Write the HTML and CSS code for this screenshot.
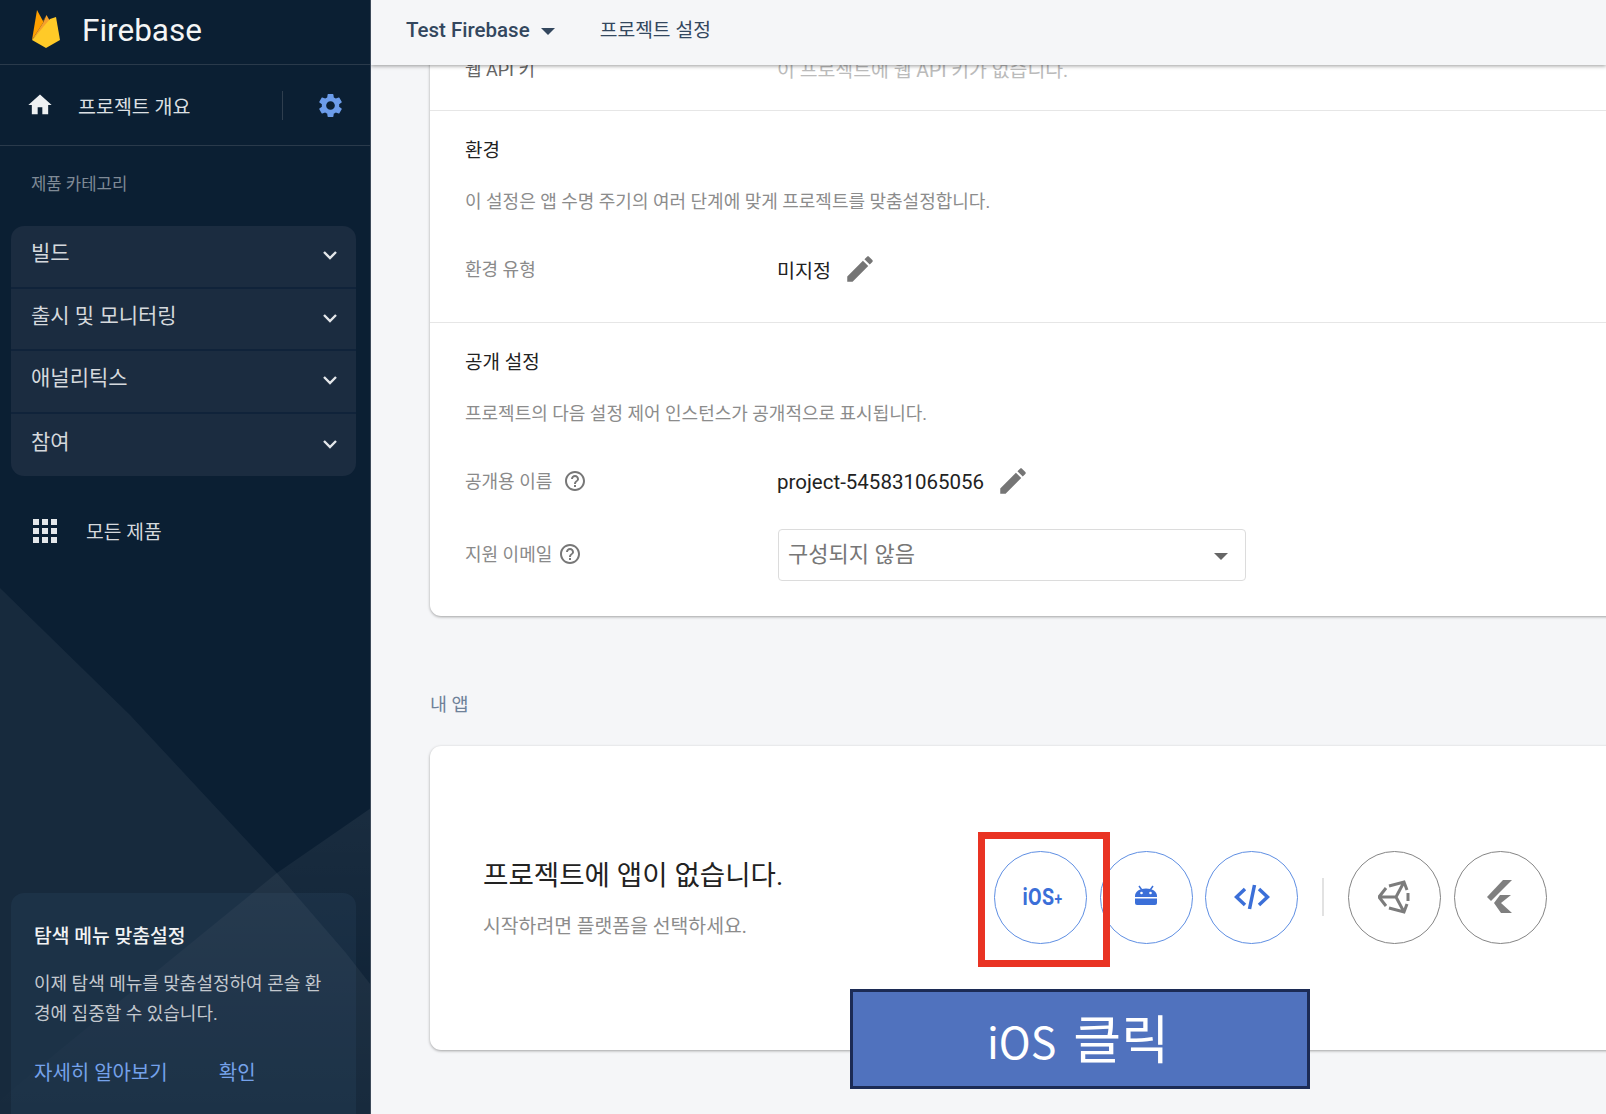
FILE: index.html
```html
<!doctype html>
<html lang="ko">

<head>
	<meta charset="utf-8">
	<title>프로젝트 설정 - Firebase</title>
	<meta name="viewport" content="width=device-width, initial-scale=1">
	<link rel="stylesheet" href="styles.css">
</head>

<body>
	<aside class="sidebar">
		<svg class="sidebar-bg" viewBox="0 0 371 1114">
			<defs>
				<linearGradient id="bg-fade" x1="0" y1="0" x2="0" y2="1">
					<stop offset="0" stop-color="#fff" stop-opacity="0.06"></stop>
					<stop offset="1" stop-color="#fff" stop-opacity="0"></stop>
				</linearGradient>
			</defs>
			<polygon class="bg-left" points="0,588 130,715 277,873 346,953 371,985 371,1114 0,1114"></polygon>
			<polygon class="bg-right" points="371,808 277,873 60,1050 0,1100 0,1114 371,1114"></polygon>
		</svg>

		<div class="brand">
			<svg class="brand-logo" viewBox="0 0 28 38">
				<path d="M0 30 5 0l6.500 12z" fill="#ffa000"></path>
				<path d="M0 30 14.500 5 11 12z" fill="#ffa000"></path>
				<path d="M0 30 11.500 12l3-7 3.500 6z" fill="#f5a02c"></path>
				<path d="M0 30 18 9l6-2 4 23-14 8z" fill="#ffca28"></path>
			</svg>
			<span class="brand-name">Firebase</span>
		</div>

		<div class="overview">
			<svg class="overview-home" viewBox="0 0 24 24"><path d="M10 20v-6h4v6h5v-8h3L12 3 2 12h3v8z"></path></svg>
			<span class="overview-label">프로젝트 개요</span>
			<span class="overview-sep"></span>
			<svg class="overview-gear" viewBox="0 0 24 24"><path d="M19.140 12.940c.04-.3.06-.61.06-.94 0-.32-.02-.64-.07-.94l2.030-1.580a.49.49 0 0 0 .12-.61l-1.920-3.320a.488.488 0 0 0-.59-.22l-2.390.96c-.5-.38-1.030-.7-1.620-.94l-.36-2.540a.484.484 0 0 0-.48-.41h-3.840c-.24 0-.43.17-.47.41l-.36 2.540c-.59.24-1.130.57-1.620.94l-2.390-.96c-.22-.08-.47 0-.59.22L2.740 8.870c-.12.21-.08.47.12.61l2.030 1.580c-.05.3-.09.63-.09.94s.02.64.07.94l-2.030 1.580a.49.49 0 0 0-.12.61l1.920 3.320c.12.22.37.29.59.22l2.390-.96c.5.38 1.030.7 1.620.94l.36 2.540c.05.24.24.41.48.41h3.840c.24 0 .44-.17.47-.41l.36-2.540c.59-.24 1.130-.56 1.620-.94l2.390.96c.22.08.47 0 .59-.22l1.920-3.320c.12-.22.07-.47-.12-.61l-2.010-1.580zM12 15.600A3.610 3.610 0 0 1 8.400 12c0-1.980 1.620-3.600 3.600-3.600s3.600 1.620 3.600 3.600-1.620 3.600-3.600 3.600z"></path></svg>
		</div>

		<div class="category-title">제품 카테고리</div>

		<ul class="category-panel">
			<li class="category-row">빌드<svg class="chevron" viewBox="0 0 16 10"><path d="M2 2l6 6 6-6"></path></svg></li>
			<li class="category-row">출시 및 모니터링<svg class="chevron" viewBox="0 0 16 10"><path d="M2 2l6 6 6-6"></path></svg></li>
			<li class="category-row">애널리틱스<svg class="chevron" viewBox="0 0 16 10"><path d="M2 2l6 6 6-6"></path></svg></li>
			<li class="category-row">참여<svg class="chevron" viewBox="0 0 16 10"><path d="M2 2l6 6 6-6"></path></svg></li>
		</ul>

		<div class="all-products">
			<svg class="all-products-icon" viewBox="0 0 24 24">
				<rect width="6" height="6"></rect><rect x="9" width="6" height="6"></rect><rect x="18" width="6" height="6"></rect>
				<rect y="9" width="6" height="6"></rect><rect x="9" y="9" width="6" height="6"></rect><rect x="18" y="9" width="6" height="6"></rect>
				<rect y="18" width="6" height="6"></rect><rect x="9" y="18" width="6" height="6"></rect><rect x="18" y="18" width="6" height="6"></rect>
			</svg>
			<span>모든 제품</span>
		</div>

		<div class="tip">
			<h3 class="tip-title">탐색 메뉴 맞춤설정</h3>
			<p class="tip-body">이제 탐색 메뉴를 맞춤설정하여 콘솔 환경에 집중할 수 있습니다.</p>
			<div class="tip-links"><a>자세히 알아보기</a><a>확인</a></div>
		</div>
	</aside>

	<main class="main">
		<header class="topbar">
			<span class="topbar-project">Test Firebase</span>
			<span class="topbar-caret"></span>
			<span class="topbar-page">프로젝트 설정</span>
		</header>

		<div class="content">
			<section class="card">
				<div class="card-section first">
					<div class="field faded">
						<span class="field-label">웹 API 키</span>
						<span class="field-value">이 프로젝트에 웹 API 키가 없습니다.</span>
					</div>
				</div>

				<div class="card-section">
					<h2 class="section-title">환경</h2>
					<p class="section-desc">이 설정은 앱 수명 주기의 여러 단계에 맞게 프로젝트를 맞춤설정합니다.</p>
					<div class="field">
						<span class="field-label">환경 유형</span>
						<span class="field-value">미지정</span>
						<svg class="pencil" viewBox="0 0 24 24"><path d="M3 17.250V21h3.750L17.810 9.940l-3.750-3.750L3 17.250zM20.710 7.040c.39-.39.39-1.020 0-1.410l-2.340-2.340c-.39-.39-1.020-.39-1.410 0l-1.830 1.830 3.750 3.750 1.830-1.830z"></path></svg>
					</div>
				</div>

				<div class="card-section last">
					<h2 class="section-title">공개 설정</h2>
					<p class="section-desc">프로젝트의 다음 설정 제어 인스턴스가 공개적으로 표시됩니다.</p>
					<div class="field">
						<span class="field-label">공개용 이름
							<svg class="help" viewBox="0 0 24 24"><path d="M11 18h2v-2h-2v2zm1-16C6.480 2 2 6.480 2 12s4.480 10 10 10 10-4.480 10-10S17.520 2 12 2zm0 18c-4.410 0-8-3.590-8-8s3.590-8 8-8 8 3.590 8 8-3.590 8-8 8zm0-14c-2.210 0-4 1.790-4 4h2c0-1.100.9-2 2-2s2 .9 2 2c0 2-3 1.750-3 5h2c0-2.250 3-2.500 3-5 0-2.210-1.790-4-4-4z"></path></svg>
						</span>
						<span class="field-value project-id">project-545831065056</span>
						<svg class="pencil" viewBox="0 0 24 24"><path d="M3 17.250V21h3.750L17.810 9.940l-3.750-3.750L3 17.250zM20.710 7.040c.39-.39.39-1.020 0-1.410l-2.340-2.340c-.39-.39-1.020-.39-1.410 0l-1.830 1.830 3.750 3.750 1.830-1.830z"></path></svg>
					</div>
					<div class="field field-select">
						<span class="field-label">지원 이메일
							<svg class="help" viewBox="0 0 24 24"><path d="M11 18h2v-2h-2v2zm1-16C6.480 2 2 6.480 2 12s4.480 10 10 10 10-4.480 10-10S17.520 2 12 2zm0 18c-4.410 0-8-3.590-8-8s3.590-8 8-8 8 3.590 8 8-3.590 8-8 8zm0-14c-2.210 0-4 1.790-4 4h2c0-1.100.9-2 2-2s2 .9 2 2c0 2-3 1.750-3 5h2c0-2.250 3-2.500 3-5 0-2.210-1.790-4-4-4z"></path></svg>
						</span>
						<div class="select"><span class="select-text">구성되지 않음</span><span class="select-caret"></span></div>
					</div>
				</div>
			</section>

			<h2 class="apps-title">내 앱</h2>

			<section class="card apps-card">
				<div class="apps-text">
					<h3 class="apps-heading">프로젝트에 앱이 없습니다.</h3>
					<p class="apps-sub">시작하려면 플랫폼을 선택하세요.</p>
				</div>
				<div class="platforms">
					<div class="platform blue"><span class="ios-mark">iOS<small>+</small></span></div>
					<div class="platform blue">
						<svg class="platform-icon" viewBox="0 0 24 24">
							<path class="fill" d="M1 11C1 6.500 5.500 3.500 12 3.500s11 3 11 7.500v1H1z"></path>
							<path class="line" d="M5 1l2.500 3.500M19 1l-2.500 3.500"></path>
							<circle cx="7.500" cy="8" r="1.300" fill="#fff"></circle>
							<circle cx="16.500" cy="8" r="1.300" fill="#fff"></circle>
							<path class="fill" d="M1 13.500h22V18a2 2 0 0 1-2 2H3a2 2 0 0 1-2-2z"></path>
						</svg>
					</div>
					<div class="platform blue">
						<svg class="platform-icon wide" viewBox="0 0 36 26">
							<path class="line thick" d="M11 5 2.500 13l8.500 8M25 5l8.500 8-8.500 8M20.500 1 15.500 25"></path>
						</svg>
					</div>
					<span class="platform-sep"></span>
					<div class="platform gray">
						<svg class="platform-icon unity" viewBox="0 0 32 34">
							<path class="line gray-line" d="M1 17 8 8M11 6 26 2 29 10M30 13V21M29 24 26 32 11 28M8 26 1 17H18M26 2 18 17 26 32"></path>
						</svg>
					</div>
					<div class="platform gray">
						<svg class="platform-icon flutter" viewBox="0 0 26 34">
							<path class="gray-fill" d="M16 0h9L4 21 0 17z"></path>
							<path class="gray-fill" d="M13 15h11L14 23l11 10H14L7 23z"></path>
						</svg>
					</div>
				</div>
			</section>
		</div>

		<div class="callout-frame"></div>
		<div class="callout-label"><span>iOS <b>클릭</b></span></div>
	</main>
</body>

</html>
```

FILE: styles.css
```css
* {
	box-sizing: border-box;
}

html, body {
	width: 100%;
	height: 100%;
	margin: 0;
	padding: 0;
	overflow: hidden;
}

body {
	display: flex;
	background-color: #f5f6f8;
	font-family: Roboto, "Noto Sans CJK KR", sans-serif;
	color: #222;
}

h2, h3, p, ul {
	margin: 0;
	padding: 0;
	font-weight: normal;
}

/* sidebar */
.sidebar {
	position: relative;
	flex: 0 0 371px;
	display: flex;
	flex-direction: column;
	height: 100%;
	overflow: hidden;
	background-color: #0b1f33;
	border-right: 1px solid #3d4a5a;
	color: #e4e7ea;
}

.sidebar-bg {
	position: absolute;
	top: 0;
	left: 0;
	width: 371px;
	height: 1114px;
}

.bg-left {
	fill: #fff;
	fill-opacity: 0.05;
}

.bg-right {
	fill: url(#bg-fade);
}

.brand, .overview, .category-title, .category-panel, .all-products, .tip {
	position: relative;
}

.brand {
	display: flex;
	align-items: center;
	flex: 0 0 65px;
	padding-left: 32px;
	border-bottom: 1px solid #2a3a4b;
}

.brand-logo {
	width: 28px;
	height: 38px;
	margin-top: -7px;
}

.brand-name {
	margin: -4px 0 0 22px;
	font-size: 31.500px;
	color: #f4f5f6;
}

.overview {
	display: flex;
	align-items: center;
	flex: 0 0 81px;
	padding: 0 0 0 26px;
	border-bottom: 1px solid #2a3a4b;
}

.overview-home {
	width: 28px;
	height: 28px;
	fill: #eef0f2;
}

.overview-label {
	width: 204px;
	margin-left: 24px;
	font-size: 19.500px;
	color: #dde0e4;
}

.overview-sep {
	width: 1px;
	height: 29px;
	background-color: #2f3e4e;
}

.overview-gear {
	width: 29px;
	height: 29px;
	margin-left: 33px;
	fill: #6c9cea;
}

.category-title {
	margin: 25px 0 0 31px;
	line-height: 28px;
	font-size: 16.700px;
	color: #7f8a96;
}

.category-panel {
	margin: 27px 14px 0 11px;
	list-style: none;
	background-color: #1b2c40;
	border-radius: 13px;
	overflow: hidden;
}

.category-row {
	display: flex;
	align-items: center;
	justify-content: space-between;
	height: 62.500px;
	padding: 0 18px 10px 20px;
	border-bottom: 2px solid #10233a;
	font-size: 21px;
	color: #d5d9dd;
}

.category-row:last-child {
	border-bottom: 0;
}

.chevron {
	width: 16px;
	height: 10px;
	margin-top: 8px;
}

.chevron path {
	fill: none;
	stroke: #e4e7ea;
	stroke-width: 2.400;
}

.all-products {
	display: flex;
	align-items: center;
	margin: 43px 0 0 33px;
	height: 24px;
	font-size: 19.300px;
	color: #d5d9dd;
}

.all-products-icon {
	width: 24px;
	height: 24px;
	margin-right: 29px;
	fill: #e4e7ea;
}

.tip {
	margin: auto 14px -12px 11px;
	height: 233px;
	padding: 30px 32px 0 23px;
	background-color: rgba(90, 130, 180, 0.09);
	border-radius: 13px;
}

.tip-title {
	line-height: 28px;
	font-size: 19.300px;
	font-weight: 500;
	color: #f1f2f4;
}

.tip-body {
	margin-top: 18px;
	line-height: 29.500px;
	font-size: 18px;
	color: #c3c8ce;
	word-break: break-all;
}

.tip-links {
	display: flex;
	gap: 51px;
	margin-top: 31px;
	line-height: 28px;
	font-size: 20px;
	color: #75a2ea;
}

/* main */
.main {
	position: relative;
	flex: 1;
	min-width: 0;
	height: 100%;
	overflow: hidden;
}

.topbar {
	position: relative;
	z-index: 2;
	display: flex;
	align-items: center;
	height: 65px;
	padding: 0 0 5px 35px;
	background-color: #f5f6f8;
	box-shadow: 0 1px 4px rgba(0, 0, 0, 0.4);
	font-size: 20.500px;
	font-weight: 500;
	color: #33475e;
}

.topbar-caret {
	width: 0;
	height: 0;
	margin: 2px 0 0 11px;
	border: 7px solid transparent;
	border-top-color: #33475e;
	border-bottom: 0;
}

.topbar-page {
	margin: -2px 0 0 45px;
	font-size: 19.300px;
	font-weight: normal;
}

/* scrolled past the top of the first card */
.content {
	margin: -20px -30px 0 59px;
}

.card {
	background-color: #fff;
	border-radius: 11px;
	box-shadow: 0 1px 3px rgba(0, 0, 0, 0.35);
}

.card-section {
	padding: 26px 0 33px 35px;
	border-bottom: 1px solid #e6e6e6;
}

.card-section.first {
	height: 66px;
	padding-top: 0;
	padding-bottom: 0;
}

.card-section.last {
	padding-bottom: 35px;
	border-bottom: 0;
}

.section-title {
	line-height: 28px;
	font-size: 19px;
	color: #222;
}

.section-desc {
	margin-top: 23px;
	line-height: 28px;
	font-size: 18px;
	color: #8c8c8c;
}

.field {
	display: flex;
	align-items: center;
	height: 40px;
	margin-top: 33px;
}

.first .field {
	height: 46px;
	margin-top: 0;
}

.faded .field-label, .faded .field-value {
	margin-top: 0;
	font-size: 18px;
	color: #666;
}

.faded .field-value {
	font-size: 19.400px;
	color: #bbb;
}

.field-label {
	display: flex;
	align-items: center;
	flex: 0 0 312px;
	margin-top: -2px;
	font-size: 18px;
	color: #8a8a8a;
}

.field-value {
	font-size: 19.600px;
	color: #222;
}

.project-id {
	margin-top: 2px;
	font-size: 20.500px;
}

.pencil {
	width: 34px;
	height: 34px;
	margin-left: 12px;
	fill: #757575;
}

.help {
	width: 24px;
	height: 24px;
	margin: 2px 0 0 11px;
	fill: #777;
}

.field-select {
	height: 52px;
	margin-top: 28px;
}

.field-select .field-label {
	margin-top: -4px;
}

.field-select .help {
	margin-left: 6px;
}

.select {
	display: flex;
	align-items: center;
	justify-content: space-between;
	width: 468px;
	height: 52px;
	margin-left: 1px;
	padding: 0 17px 0 9px;
	background-color: #fff;
	border: 1px solid #dcdcdc;
	border-radius: 4px;
	font-size: 22px;
	color: #777;
}

.select-text {
	margin-top: -6px;
}

.select-caret {
	width: 0;
	height: 0;
	margin-top: 2px;
	border: 7px solid transparent;
	border-top-color: #666;
	border-bottom: 0;
}

.apps-title {
	margin-top: 75px;
	line-height: 28px;
	font-size: 18.500px;
	color: #6f8199;
}

.apps-card {
	display: flex;
	align-items: center;
	height: 304px;
	margin-top: 27px;
	padding-left: 53px;
}

.apps-text {
	flex: 0 0 511px;
	margin-top: 2px;
}

.apps-heading {
	margin-top: -2px;
	line-height: 40px;
	font-size: 27.600px;
	color: #222;
}

.apps-sub {
	margin-top: 18px;
	line-height: 26px;
	font-size: 19.350px;
	color: #8c8c8c;
}

.platforms {
	display: flex;
	align-items: center;
	gap: 12.500px;
	margin-top: -2px;
}

.platform {
	display: flex;
	align-items: center;
	justify-content: center;
	width: 93px;
	height: 93px;
	border-radius: 50%;
	background-color: #fff;
}

.platform.blue {
	border: 1.500px solid #5f8fe3;
}

.platform.gray {
	border: 1.500px solid #858585;
}

.platform-sep {
	width: 2px;
	height: 38px;
	margin: 0 11.500px;
	background-color: #e2e2e2;
}

.ios-mark {
	margin-left: 4px;
	font-size: 24px;
	font-weight: 700;
	letter-spacing: 0.5px;
	color: #3b6fd8;
	transform: scaleX(0.82);
}

.ios-mark small {
	font-size: 17px;
}

.platform-icon {
	width: 24px;
	height: 24px;
}

.platform-icon.wide {
	width: 36px;
	height: 34px;
}

.platform-icon.unity {
	width: 32px;
	height: 34px;
	margin-left: -2px;
}

.platform-icon.flutter {
	width: 26px;
	height: 34px;
}

.platform-icon .fill {
	fill: #3b6fd8;
}

.platform-icon .line {
	fill: none;
	stroke: #3b6fd8;
	stroke-width: 1.500;
}

.platform-icon .thick {
	stroke-width: 3.500;
}

.platform-icon .gray-line {
	stroke: #7c7c7c;
	stroke-width: 3;
}

.platform-icon .gray-fill {
	fill: #7f7f7f;
}

/* annotations drawn on top of the screenshot */
.callout-frame {
	position: absolute;
	top: 832px;
	left: 607px;
	width: 132px;
	height: 135px;
	border: 7px solid #e93323;
}

.callout-label {
	position: absolute;
	top: 989px;
	left: 479px;
	display: flex;
	align-items: center;
	justify-content: center;
	width: 460px;
	height: 100px;
	padding: 0 4px 6px 0;
	background-color: #5072be;
	border: 3px solid #1c2b55;
	font-family: "Noto Sans CJK KR", sans-serif;
	font-size: 43px;
	color: #fff;
	word-spacing: 5px;
}

.callout-label b {
	font-size: 52px;
	font-weight: normal;
}
```
